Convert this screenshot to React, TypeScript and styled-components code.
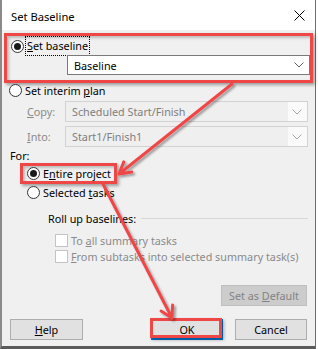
import React from 'react';
import styled, { createGlobalStyle } from 'styled-components';

const RED = '#ef4646';

const GlobalStyle = createGlobalStyle`
    body {
        margin: 0;
        background: #ffffff;
    }
`;

const Stage = styled.div`
    position: relative;
    width: 318px;
    height: 349px;
    overflow: hidden;
`;

const Dialog = styled.div`
    box-sizing: border-box;
    width: 316px;
    height: 349px;
    display: flex;
    flex-direction: column;
    background: #f0f0f0;
    border-left: 2px solid #8a8a8a;
    border-right: 1px solid #6e6e6e;
    border-bottom: 3px solid #5b5b5b;
    font-family: 'Noto Sans', 'Open Sans', sans-serif;
    font-size: 10.8px;
    color: #000;
`;

const TitleBar = styled.div`
    height: 30px;
    flex-shrink: 0;
    display: flex;
    align-items: center;
    justify-content: space-between;
    padding: 2px 10px 0 9px;
    box-sizing: border-box;
    background: #ffffff;
    font-size: 11.2px;
`;

const CloseIcon = styled.svg`
    width: 11px;
    height: 11px;
    margin-top: -2px;
`;

const Body = styled.div`
    display: flex;
    flex-direction: column;
    padding-left: 2px;
`;

const Highlight = styled.div<{ $width: number; $height: number }>`
    box-sizing: border-box;
    width: ${(p) => p.$width}px;
    height: ${(p) => p.$height}px;
    border: 3px solid ${RED};
    box-shadow: 2px 2px 3px rgba(0, 0, 0, 0.35), inset 2px 2px 3px rgba(0, 0, 0, 0.22);
`;

const BaselineGroup = styled(Highlight)`
    margin-top: 3px;
    padding: 0 2px;
    display: flex;
    flex-direction: column;
`;

const ProjectGroup = styled(Highlight)`
    margin-left: 16px;
    padding-left: 4px;
    display: flex;
    align-items: center;
`;

const Option = styled.label<{ $indent: number; $top: number }>`
    display: flex;
    align-items: center;
    gap: 3px;
    height: 14px;
    padding-left: ${(p) => p.$indent}px;
    margin-top: ${(p) => p.$top}px;
    white-space: nowrap;
`;

const Radio = styled.span<{ $checked?: boolean }>`
    box-sizing: border-box;
    width: 13px;
    height: 13px;
    flex-shrink: 0;
    border-radius: 50%;
    border: 1px solid #333;
    background: #fff;
    display: flex;
    align-items: center;
    justify-content: center;

    &::after {
        content: '';
        width: 7px;
        height: 7px;
        border-radius: 50%;
        background: ${(p) => (p.$checked ? '#1a1a1a' : 'transparent')};
    }
`;

const FocusText = styled.span`
    outline: 1px dotted #000;
    padding: 1px 1px 2px;
    margin-left: -1px;
`;

const Combo = styled.div<{ $disabled?: boolean }>`
    box-sizing: border-box;
    width: 243px;
    height: 21px;
    display: flex;
    align-items: center;
    border: 1px solid ${(p) => (p.$disabled ? '#d2d2d2' : '#7a7a7a')};
    background: ${(p) => (p.$disabled ? '#efefef' : '#ffffff')};
    color: ${(p) => (p.$disabled ? '#7e7e7e' : '#000')};
`;

const ComboText = styled.span`
    flex: 1;
    padding-left: 6px;
    white-space: nowrap;
`;

const ComboArrow = styled.span<{ $disabled?: boolean }>`
    width: 17px;
    align-self: stretch;
    display: flex;
    align-items: center;
    justify-content: center;
    padding-right: 2px;
    background: ${(p) => (p.$disabled ? '#fafafa' : 'transparent')};

    svg {
        stroke: ${(p) => (p.$disabled ? '#a8a8a8' : '#606060')};
    }
`;

const MainCombo = styled(Combo)`
    margin: 2px 0 0 58px;
    height: 20px;
`;

const FieldRow = styled.div<{ $top: number }>`
    display: flex;
    align-items: center;
    margin-top: ${(p) => p.$top}px;
    padding-left: 23px;
`;

const FieldLabel = styled.span`
    width: 38px;
    color: #8a8a8a;
`;

const ForLabel = styled.div`
    height: 14px;
    line-height: 14px;
    margin-top: 2px;
    padding-left: 6px;
`;

const RollUpRow = styled.div`
    display: flex;
    align-items: center;
    height: 14px;
    margin-top: 12px;
    padding: 0 7px 0 44px;
    white-space: nowrap;
`;

const Rule = styled.div`
    flex: 1;
    height: 1px;
    margin-left: 5px;
    background: #d7d7d7;
`;

const CheckRow = styled.label<{ $top: number }>`
    display: flex;
    align-items: center;
    gap: 3px;
    height: 14px;
    margin-top: ${(p) => p.$top}px;
    padding-left: 51px;
    color: #8a8a8a;
    white-space: nowrap;
`;

const CheckBox = styled.span`
    box-sizing: border-box;
    width: 13px;
    height: 13px;
    border: 1px solid #c4c4c4;
    background: #fff;
`;

const DefaultRow = styled.div`
    display: flex;
    justify-content: flex-end;
    margin-top: 22px;
    padding-right: 8px;
`;

const Button = styled.button<{ $width: number; $disabled?: boolean; $default?: boolean }>`
    position: relative;
    box-sizing: border-box;
    width: ${(p) => p.$width}px;
    height: 21px;
    padding: 0;
    font: inherit;
    color: ${(p) => (p.$disabled ? '#838383' : '#000')};
    background: ${(p) => (p.$disabled ? '#cccccc' : '#e1e1e1')};
    border: 1px solid ${(p) => (p.$disabled ? '#bfbfbf' : p.$default ? '#0078d7' : '#adadad')};
    box-shadow: ${(p) => (p.$default ? 'inset 0 0 0 1px #0078d7' : 'none')};
`;

const OkButton = styled(Button)`
    &::after {
        content: '';
        position: absolute;
        left: -2px;
        top: -2px;
        width: 72px;
        height: 20px;
        box-sizing: border-box;
        border: 3px solid ${RED};
        box-shadow: 2px 2px 3px rgba(0, 0, 0, 0.3);
    }
`;

const ButtonBar = styled.div`
    display: flex;
    align-items: center;
    gap: 12px;
    margin-top: 13px;
    padding: 0 8px 0 6px;
`;

const Spacer = styled.div`
    flex: 1;
`;

const Annotations = styled.svg`
    position: absolute;
    left: 0;
    top: 0;
    width: 318px;
    height: 349px;
    pointer-events: none;
`;

const Chevron = () => (
    <svg width="10" height="6" viewBox="0 0 10 6" fill="none" strokeWidth="1">
        <path d="M0.5 0.5 L5 5 L9.5 0.5" />
    </svg>
);

const arrowPath = (x1: number, y1: number, x2: number, y2: number) => {
    const a = Math.atan2(y1 - y2, x1 - x2);
    const len = 13;
    const s = Math.PI / 6;
    const w1 = `${x2 + len * Math.cos(a + s)} ${y2 + len * Math.sin(a + s)}`;
    const w2 = `${x2 + len * Math.cos(a - s)} ${y2 + len * Math.sin(a - s)}`;
    return `M${x1} ${y1} L${x2} ${y2} M${w1} L${x2} ${y2} L${w2}`;
};

const App = () => {
    return (
        <Stage>
            <GlobalStyle />
            <Dialog>
                <TitleBar>
                    <span>Set Baseline</span>
                    <CloseIcon viewBox="0 0 11 11" fill="none" stroke="#000" strokeWidth="1">
                        <path d="M0.5 0.5 L10.5 10.5 M10.5 0.5 L0.5 10.5" />
                    </CloseIcon>
                </TitleBar>
                <Body>
                    <BaselineGroup $width={309} $height={50}>
                        <Option $indent={2} $top={3}>
                            <Radio $checked />
                            <FocusText>
                                <u>S</u>et baseline
                            </FocusText>
                        </Option>
                        <MainCombo>
                            <ComboText>Baseline</ComboText>
                            <ComboArrow>
                                <Chevron />
                            </ComboArrow>
                        </MainCombo>
                    </BaselineGroup>
                    <Option $indent={5} $top={0}>
                        <Radio />
                        <span>
                            Set interim <u>p</u>lan
                        </span>
                    </Option>
                    <FieldRow $top={4}>
                        <FieldLabel>
                            <u>C</u>opy:
                        </FieldLabel>
                        <Combo $disabled>
                            <ComboText>Scheduled Start/Finish</ComboText>
                            <ComboArrow $disabled>
                                <Chevron />
                            </ComboArrow>
                        </Combo>
                    </FieldRow>
                    <FieldRow $top={4}>
                        <FieldLabel>
                            <u>I</u>nto:
                        </FieldLabel>
                        <Combo $disabled>
                            <ComboText>Start1/Finish1</ComboText>
                            <ComboArrow $disabled>
                                <Chevron />
                            </ComboArrow>
                        </Combo>
                    </FieldRow>
                    <ForLabel>For:</ForLabel>
                    <ProjectGroup $width={97} $height={21}>
                        <Option $indent={0} $top={0}>
                            <Radio $checked />
                            <span>
                                E<u>n</u>tire project
                            </span>
                        </Option>
                    </ProjectGroup>
                    <Option $indent={23} $top={1}>
                        <Radio />
                        <span>
                            Selected <u>t</u>asks
                        </span>
                    </Option>
                    <RollUpRow>
                        <span>Roll up baselines:</span>
                        <Rule />
                    </RollUpRow>
                    <CheckRow $top={8}>
                        <CheckBox />
                        <span>
                            To <u>a</u>ll summary tasks
                        </span>
                    </CheckRow>
                    <CheckRow $top={2}>
                        <CheckBox />
                        <span>
                            <u>F</u>rom subtasks into selected summary task(s)
                        </span>
                    </CheckRow>
                    <DefaultRow>
                        <Button $width={86} $disabled>
                            Set as <u>D</u>efault
                        </Button>
                    </DefaultRow>
                    <ButtonBar>
                        <Button $width={73}>
                            <u>H</u>elp
                        </Button>
                        <Spacer />
                        <OkButton $width={72} $default>
                            OK
                        </OkButton>
                        <Button $width={72}>Cancel</Button>
                    </ButtonBar>
                </Body>
            </Dialog>
            <Annotations viewBox="0 0 318 349">
                <defs>
                    <filter id="shadow" x="-20%" y="-20%" width="140%" height="140%">
                        <feDropShadow dx="2" dy="2" stdDeviation="1.2" floodColor="#000" floodOpacity="0.35" />
                    </filter>
                </defs>
                <g
                    fill="none"
                    stroke={RED}
                    strokeWidth="3"
                    strokeLinecap="round"
                    strokeLinejoin="round"
                    filter="url(#shadow)"
                >
                    <path d={arrowPath(232, 84, 119, 174)} />
                    <path d={arrowPath(103, 184, 172, 318)} />
                </g>
            </Annotations>
        </Stage>
    );
};

export default App;
